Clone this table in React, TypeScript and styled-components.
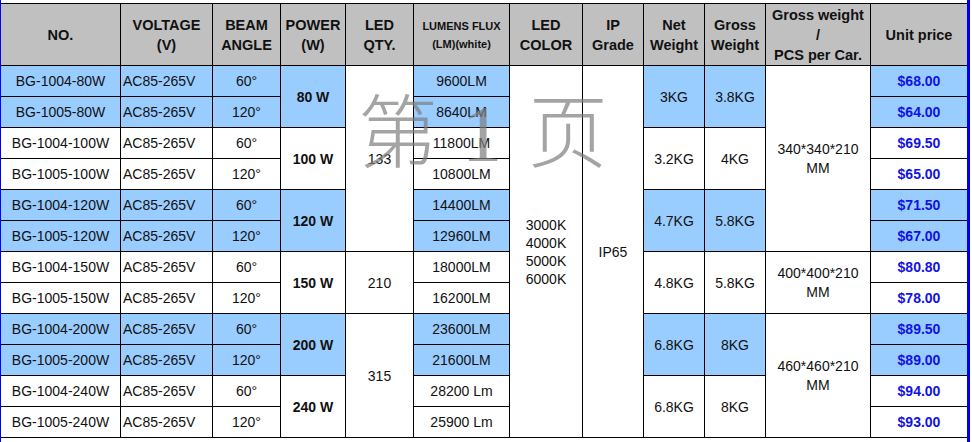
import React from 'react';
import styled, { createGlobalStyle } from 'styled-components';

const GlobalStyle = createGlobalStyle`
  html, body {
    margin: 0;
    padding: 0;
    background: #fff;
  }
  body {
    font-family: "Liberation Sans", Arial, sans-serif;
    color: #111;
  }
`;

const Page = styled.div`
  position: relative;
  width: 972px;
  height: 442px;
  overflow: hidden;
  background: #fff;
`;

const Frame = styled.div`
  width: 970px;
  height: 442px;
  box-sizing: border-box;
  padding-top: 3px;
  border-left: 1px solid #0000ff;
  border-right: 3px solid #0000ee;
`;

const Sheet = styled.div`
  display: grid;
  grid-template-columns: 120px 92px 68px 65px 68px 96px 73px 61px 61px 61px 105px 96px;
  grid-template-rows: 62px repeat(12, 31px);
  border-top: 1px solid #000;
`;

const Cell = styled.div<{ $col: number; $row: number; $span?: number; $blue?: boolean; $left?: boolean }>`
  grid-column: ${(p) => p.$col};
  grid-row: ${(p) => p.$row} / span ${(p) => p.$span || 1};
  display: flex;
  flex-direction: column;
  align-items: ${(p) => (p.$left ? 'flex-start' : 'center')};
  justify-content: center;
  padding-left: ${(p) => (p.$left ? '2px' : '0')};
  box-sizing: border-box;
  border-bottom: 1px solid #000;
  border-right: ${(p) => (p.$col === 12 ? 'none' : '1px solid #000')};
  background: ${(p) => (p.$blue ? '#99ccff' : '#fff')};
  font-size: 14px;
  line-height: 18px;
  text-align: center;
  white-space: nowrap;
`;

const HeadCell = styled(Cell)`
  background: #c0c0c0;
  font-weight: bold;
  font-size: 14.5px;
  line-height: 20px;
`;

const SmallHead = styled.span`
  font-size: 11px;
  line-height: 18px;
`;

const Bold = styled.span`
  font-weight: bold;
`;

const Price = styled.span`
  font-weight: bold;
  color: #1212e6;
`;

const Lines = styled.span`
  line-height: 19px;
`;

// "第 1 页" page stamp lying over the sheet
const Watermark = styled.div`
  position: absolute;
  left: 358px;
  top: 86px;
  display: flex;
  align-items: baseline;
  gap: 22px;
  font-family: "Noto Sans CJK SC", serif;
  font-size: 80px;
  line-height: 1;
  font-weight: 300;
  color: rgba(125, 125, 125, 0.7);
  pointer-events: none;
`;

const StampDigit = styled.span`
  font-family: "Liberation Serif", serif;
  margin-left: 2px;
  margin-right: 4px;
`;

type Row = { no: string; beam: string; lm: string; price: string; blue: boolean };

const rows: Row[] = [
  { no: 'BG-1004-80W', beam: '60°', lm: '9600LM', price: '$68.00', blue: true },
  { no: 'BG-1005-80W', beam: '120°', lm: '8640LM', price: '$64.00', blue: true },
  { no: 'BG-1004-100W', beam: '60°', lm: '11800LM', price: '$69.50', blue: false },
  { no: 'BG-1005-100W', beam: '120°', lm: '10800LM', price: '$65.00', blue: false },
  { no: 'BG-1004-120W', beam: '60°', lm: '14400LM', price: '$71.50', blue: true },
  { no: 'BG-1005-120W', beam: '120°', lm: '12960LM', price: '$67.00', blue: true },
  { no: 'BG-1004-150W', beam: '60°', lm: '18000LM', price: '$80.80', blue: false },
  { no: 'BG-1005-150W', beam: '120°', lm: '16200LM', price: '$78.00', blue: false },
  { no: 'BG-1004-200W', beam: '60°', lm: '23600LM', price: '$89.50', blue: true },
  { no: 'BG-1005-200W', beam: '120°', lm: '21600LM', price: '$89.00', blue: true },
  { no: 'BG-1004-240W', beam: '60°', lm: '28200 Lm', price: '$94.00', blue: false },
  { no: 'BG-1005-240W', beam: '120°', lm: '25900 Lm', price: '$93.00', blue: false },
];

// pairs of rows share power / weights
const pairs = [
  { power: '80 W', net: '3KG', gross: '3.8KG', blue: true },
  { power: '100 W', net: '3.2KG', gross: '4KG', blue: false },
  { power: '120 W', net: '4.7KG', gross: '5.8KG', blue: true },
  { power: '150 W', net: '4.8KG', gross: '5.8KG', blue: false },
  { power: '200 W', net: '6.8KG', gross: '8KG', blue: true },
  { power: '240 W', net: '6.8KG', gross: '8KG', blue: false },
];

const qty = [
  { start: 0, span: 6, value: '133' },
  { start: 6, span: 2, value: '210' },
  { start: 8, span: 4, value: '315' },
];

const cartons = [
  { start: 0, span: 6, value: '340*340*210' },
  { start: 6, span: 2, value: '400*400*210' },
  { start: 8, span: 4, value: '460*460*210' },
];

function App() {
  return (
    <>
      <GlobalStyle />
      <Page>
        <Frame>
          <Sheet>
            <HeadCell $col={1} $row={1}>NO.</HeadCell>
            <HeadCell $col={2} $row={1}>
              <span>VOLTAGE</span>
              <span>(V)</span>
            </HeadCell>
            <HeadCell $col={3} $row={1}>
              <span>BEAM</span>
              <span>ANGLE</span>
            </HeadCell>
            <HeadCell $col={4} $row={1}>
              <span>POWER</span>
              <span>(W)</span>
            </HeadCell>
            <HeadCell $col={5} $row={1}>
              <span>LED</span>
              <span>QTY.</span>
            </HeadCell>
            <HeadCell $col={6} $row={1}>
              <SmallHead>LUMENS FLUX</SmallHead>
              <SmallHead>(LM)(white)</SmallHead>
            </HeadCell>
            <HeadCell $col={7} $row={1}>
              <span>LED</span>
              <span>COLOR</span>
            </HeadCell>
            <HeadCell $col={8} $row={1}>
              <span>IP</span>
              <span>Grade</span>
            </HeadCell>
            <HeadCell $col={9} $row={1}>
              <span>Net</span>
              <span>Weight</span>
            </HeadCell>
            <HeadCell $col={10} $row={1}>
              <span>Gross</span>
              <span>Weight</span>
            </HeadCell>
            <HeadCell $col={11} $row={1}>
              <span>Gross weight</span>
              <span>/</span>
              <span>PCS per Car.</span>
            </HeadCell>
            <HeadCell $col={12} $row={1}>Unit price</HeadCell>

            {rows.map((r, i) => (
              <React.Fragment key={r.no}>
                <Cell $col={1} $row={i + 2} $blue={r.blue}>{r.no}</Cell>
                <Cell $col={2} $row={i + 2} $blue={r.blue} $left>AC85-265V</Cell>
                <Cell $col={3} $row={i + 2} $blue={r.blue}>{r.beam}</Cell>
                <Cell $col={6} $row={i + 2} $blue={r.blue}>{r.lm}</Cell>
                <Cell $col={12} $row={i + 2} $blue={r.blue}>
                  <Price>{r.price}</Price>
                </Cell>
              </React.Fragment>
            ))}

            {pairs.map((p, i) => (
              <React.Fragment key={p.power}>
                <Cell $col={4} $row={i * 2 + 2} $span={2} $blue={p.blue}>
                  <Bold>{p.power}</Bold>
                </Cell>
                <Cell $col={9} $row={i * 2 + 2} $span={2} $blue={p.blue}>{p.net}</Cell>
                <Cell $col={10} $row={i * 2 + 2} $span={2} $blue={p.blue}>{p.gross}</Cell>
              </React.Fragment>
            ))}

            {qty.map((q) => (
              <Cell key={q.value} $col={5} $row={q.start + 2} $span={q.span}>{q.value}</Cell>
            ))}

            <Cell $col={7} $row={2} $span={12}>
              <span>3000K</span>
              <span>4000K</span>
              <span>5000K</span>
              <span>6000K</span>
            </Cell>
            <Cell $col={8} $row={2} $span={12}>IP65</Cell>

            {cartons.map((c) => (
              <Cell key={c.value} $col={11} $row={c.start + 2} $span={c.span}>
                <Lines>{c.value}</Lines>
                <Lines>MM</Lines>
              </Cell>
            ))}
          </Sheet>
        </Frame>
        <Watermark>
          <span>第</span>
          <StampDigit>1</StampDigit>
          <span>页</span>
        </Watermark>
      </Page>
    </>
  );
}

export default App;
